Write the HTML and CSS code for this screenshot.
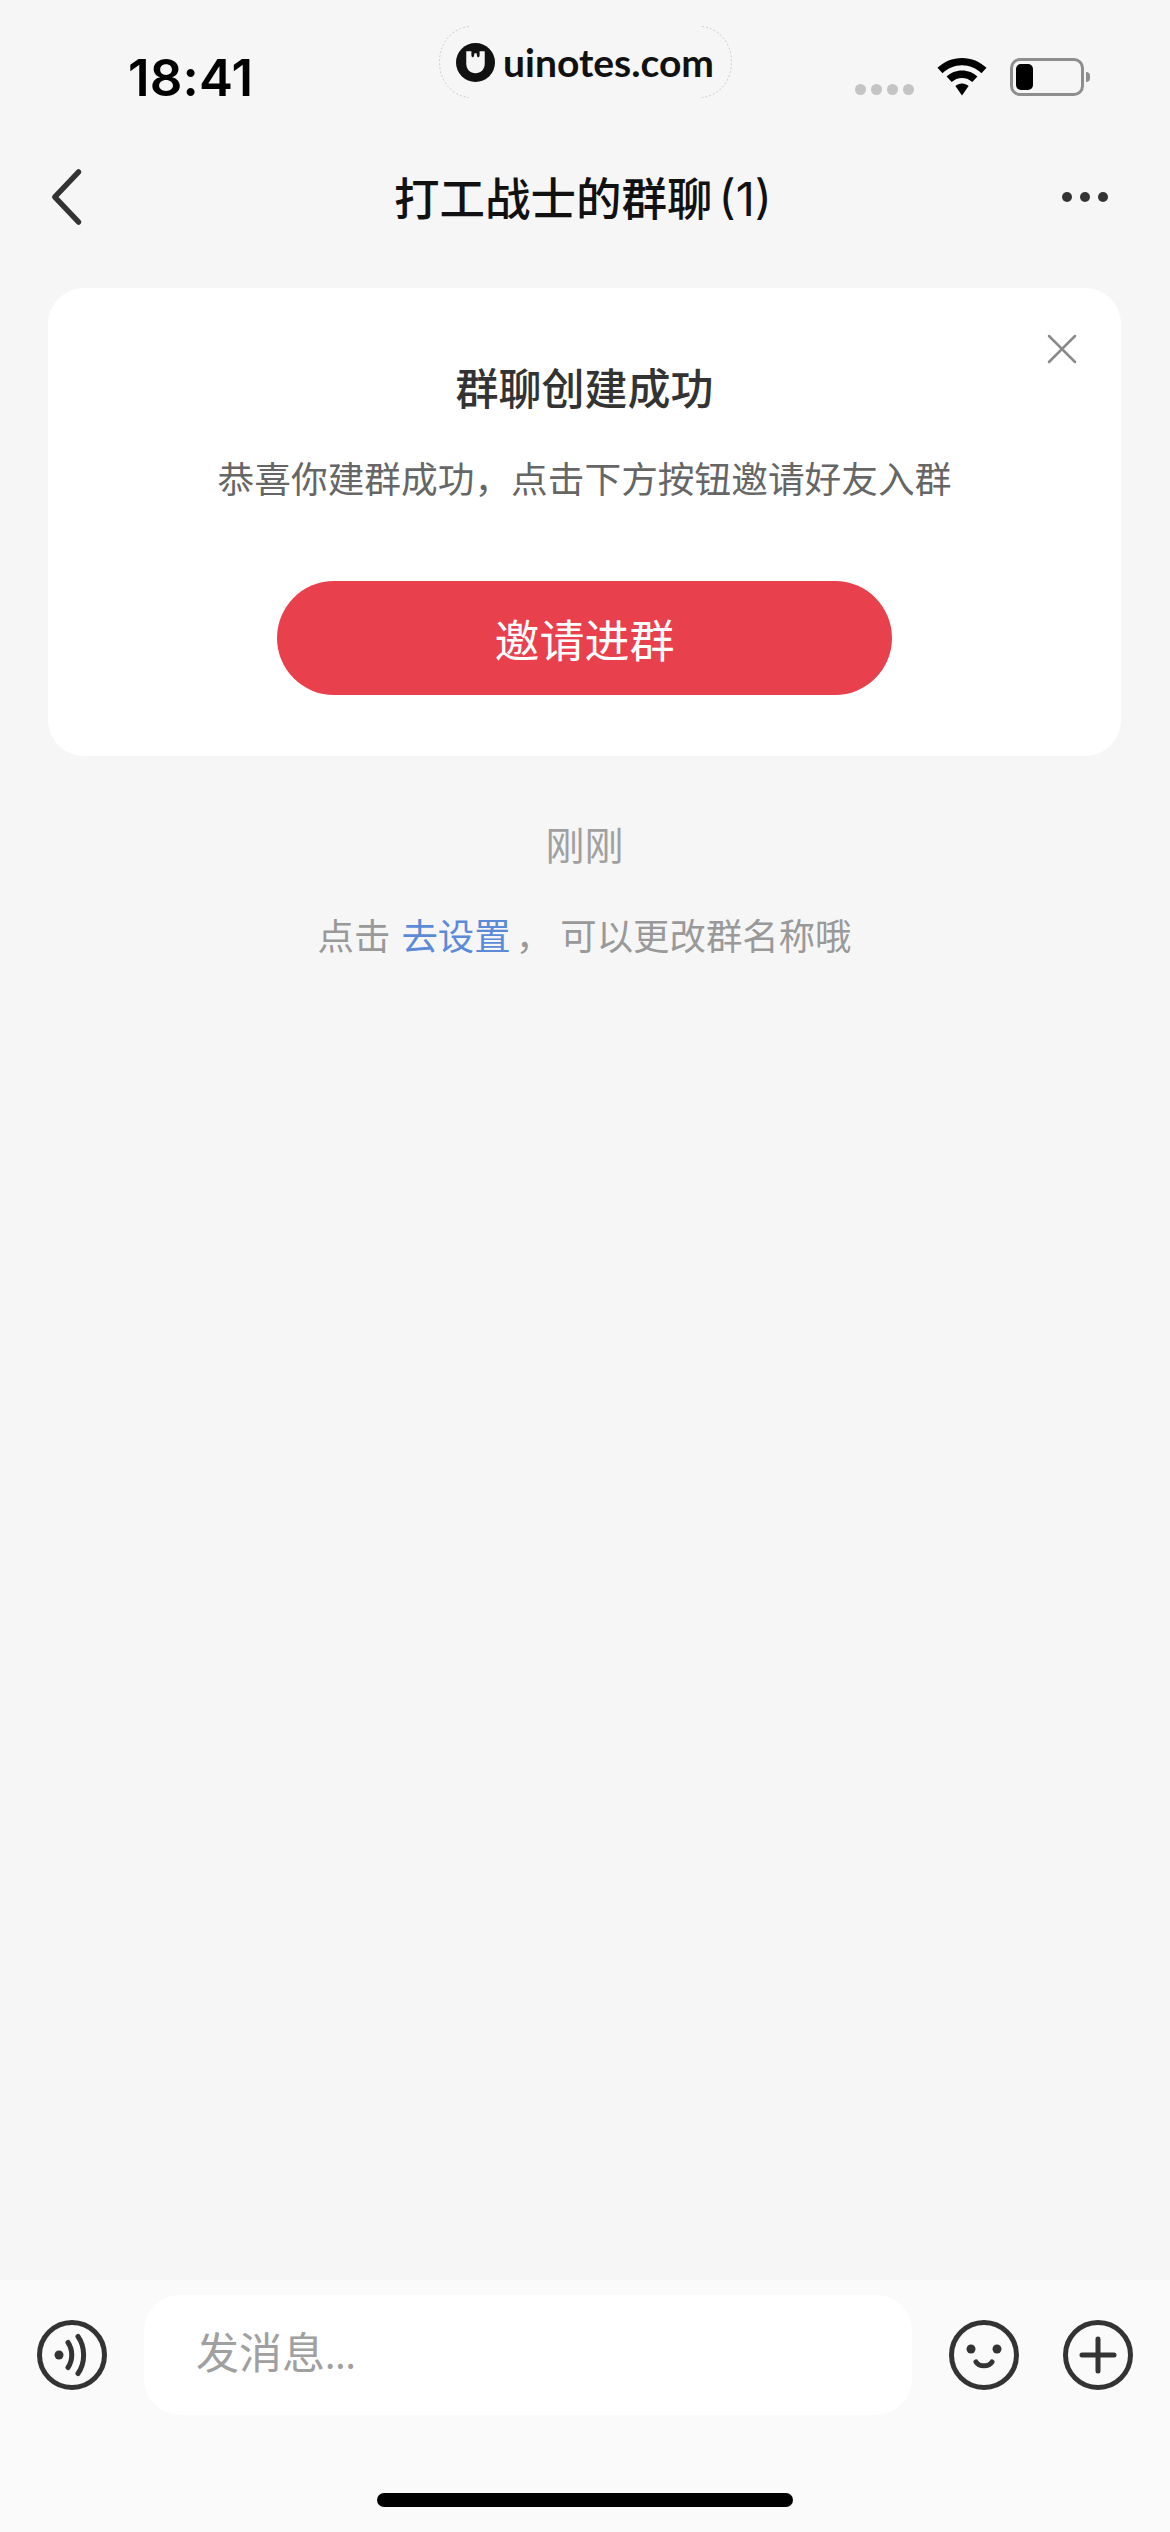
FILE: index.html
```html
<!DOCTYPE html>
<html lang="zh-CN">
<head>
<meta charset="utf-8">
<title>打工战士的群聊</title>
<link rel="stylesheet" href="styles.css">
</head>
<body>
<div class="app">
  <header class="status">
    <div class="time">18:41</div>
    <div class="status-icons">
      <div class="signal"><i></i><i></i><i></i><i></i></div>
      <svg class="wifi" width="50" height="38" viewBox="0 0 50 38"><path d="M25 0C34.500 0 43 3.700 49.500 9.800L44.500 15.300C39.400 10.400 32.500 7.300 25 7.300S10.600 10.400 5.500 15.300L.5 9.800C7 3.700 15.500 0 25 0Z"/><path d="M25 12.500C31 12.500 36.400 14.800 40.400 18.600L35.300 24.100C32.600 21.600 29 20 25 20S17.400 21.600 14.700 24.100L9.600 18.600C13.600 14.800 19 12.500 25 12.500Z"/><path d="M25 25.500C27.500 25.500 29.800 26.400 31.600 28L25 37.500 18.400 28C20.200 26.400 22.500 25.500 25 25.500Z"/></svg>
      <div class="battery"><div class="battery-body"><div class="battery-level"></div></div><div class="battery-cap"></div></div>
    </div>
  </header>
  <div class="watermark">
    <svg class="wm-ring" width="293" height="72" viewBox="0 0 293 72"><path d="M30 .5C14 2 .5 16 .5 36S14 70 30 71.500M263 .5C279 2 292.500 16 292.500 36S279 70 263 71.500" fill="none" stroke="#cfcfcf" stroke-width="1" stroke-dasharray="2 2"/></svg>
    <svg class="wm-logo" width="39" height="39" viewBox="0 0 38 38"><circle cx="19" cy="19" r="19" fill="#111"/><path d="M10 8H15V12C15 14 17 15 17.500 12.500L18 10H20L20.500 12.500C21 15 23 14 23 12V8H28V20C28 26 24 29.500 19 29.500S10 26 10 20Z" fill="#f5f5f5"/></svg>
    <span class="wm-text">uinotes.com</span>
  </div>
  <nav class="nav">
    <svg class="back" width="32" height="56" viewBox="0 0 32 56"><path d="M29 3L4 28L29 53" fill="none" stroke="#333" stroke-width="5.500" stroke-linecap="round" stroke-linejoin="round" transform="matrix(.95 0 0 1 0 0)"/></svg>
    <h1 class="nav-title">打工战士的群聊<span class="nav-count">(1)</span></h1>
    <div class="more"><i></i><i></i><i></i></div>
  </nav>
  <main class="chat">
    <section class="card">
      <svg class="close" width="30" height="30" viewBox="0 0 30 30"><path d="M2 2L28 28M28 2L2 28" stroke="#8a8a8a" stroke-width="2.500" stroke-linecap="round"/></svg>
      <h2 class="card-title">群聊创建成功</h2>
      <p class="card-sub">恭喜你建群成功，点击下方按钮邀请好友入群</p>
      <div class="invite">邀请进群</div>
    </section>
    <div class="stamp">刚刚</div>
    <p class="hint">点击 <a class="link">去设置</a> ， 可以更改群名称哦</p>
  </main>
  <footer class="bar">
    <div class="inputs">
      <svg class="ico" width="70" height="70" viewBox="0 0 70 70"><circle cx="35" cy="35" r="32.500" fill="none" stroke="#333" stroke-width="5"/><circle cx="22" cy="35" r="4.500" fill="#333"/><path d="M31 22.500C36 30 36 40 31 47.500" fill="none" stroke="#333" stroke-width="5" stroke-linecap="round"/><path d="M41 16.500C48.500 27 48.500 43 41 53.500" fill="none" stroke="#333" stroke-width="5" stroke-linecap="round"/></svg>
      <div class="field">发消息<span class="dots">...</span></div>
      <svg class="ico" width="70" height="70" viewBox="0 0 70 70"><circle cx="35" cy="35" r="32.500" fill="none" stroke="#333" stroke-width="5"/><circle cx="22" cy="29" r="4.500" fill="#333"/><circle cx="48" cy="29" r="4.500" fill="#333"/><path d="M27 42C30 47 40 47 43 42" fill="none" stroke="#333" stroke-width="5" stroke-linecap="round"/></svg>
      <svg class="ico" width="70" height="70" viewBox="0 0 70 70"><circle cx="35" cy="35" r="32.500" fill="none" stroke="#333" stroke-width="5"/><path d="M35 19V51M19 35H51" stroke="#333" stroke-width="5" stroke-linecap="round"/></svg>
    </div>
    <div class="home"></div>
  </footer>
</div>
</body>
</html>
```
FILE: styles.css
```css
* { box-sizing: border-box; }
html, body { margin: 0; padding: 0; }
body { background: #f6f6f6; font-family: "Noto Sans CJK SC", "Noto Sans", sans-serif; }
.app { position: relative; width: 1170px; height: 2532px; display: flex; flex-direction: column; overflow: hidden; }
.status { height: 136px; flex: none; display: flex; justify-content: space-between; align-items: flex-start; padding: 48px 80px 0 128px; }
.time { font-family: Inter, sans-serif; font-weight: 600; font-size: 51px; line-height: 60px; color: #000; letter-spacing: 0.2px; }
.status-icons { display: flex; align-items: flex-start; padding-top: 10px; }
.signal { display: flex; gap: 5px; margin: 26px 23px 0 0; }
.signal i { width: 11px; height: 11px; border-radius: 50%; background: #c4c4c4; }
.wifi { display: block; fill: #000; margin-right: 23px; }
.battery { display: flex; align-items: center; }
.battery-body { width: 74px; height: 38px; border: 3.500px solid #8e8e8e; border-radius: 10px; padding: 3px; }
.battery-level { width: 17px; height: 100%; background: #000; border-radius: 5px; }
.battery-cap { width: 4px; height: 10px; background: #8e8e8e; border-radius: 0 4px 4px 0; margin-left: 2px; }
.watermark { position: absolute; left: 439px; top: 26px; width: 293px; height: 72px; display: flex; align-items: center; gap: 8px; padding-left: 17px; }
.wm-ring { position: absolute; left: 0; top: 0; }
.wm-logo { display: block; flex: none; }
.wm-text { font-family: Lato, sans-serif; font-weight: 700; font-size: 39px; line-height: 40px; color: #111; }
.nav { height: 124px; flex: none; display: flex; align-items: center; position: relative; padding: 0 62px 0 51px; justify-content: space-between; margin-top: -1px; }
.back { display: block; }
.nav-title { margin: 0; flex: 1; text-align: center; font-size: 45.500px; line-height: 60px; font-weight: 500; color: #111; padding-left: 21px; }
.nav-count { font-family: Inter, sans-serif; font-weight: 400; margin-left: 6px; font-size: 47px; }
.more { display: flex; gap: 8px; }
.more i { width: 10px; height: 10px; border-radius: 50%; background: #333; display: block; }
.chat { flex: 1; padding: 29px 49px 0 48px; display: flex; flex-direction: column; align-items: center; }
.card { position: relative; width: 100%; height: 468px; background: #fff; border-radius: 36px; display: flex; flex-direction: column; align-items: center; padding-top: 68px; }
.close { position: absolute; right: 44px; top: 46px; }
.card-title { margin: 0; font-size: 43px; line-height: 60px; font-weight: 500; color: #333; }
.card-sub { margin: 31px 0 0; font-size: 36.700px; line-height: 60px; color: #666; font-weight: 400; }
.invite { margin-top: 74px; width: 615px; height: 114px; border-radius: 57px; background: #e9404e; color: #fff; font-size: 45px; display: flex; align-items: center; justify-content: center; }
.stamp { margin-top: 57px; font-size: 39px; line-height: 60px; color: #a0a0a0; }
.hint { margin: 31px 0 0; font-size: 36.400px; line-height: 60px; color: #999; }
.link { color: #5b8bd6; margin: 0 -3px 0 3px; }
.bar { height: 252px; flex: none; background: #fafafa; display: flex; flex-direction: column; align-items: center; }
.inputs { width: 100%; display: flex; align-items: center; padding: 15px 37px 0; }
.ico { display: block; flex: none; }
.ico:last-child { margin-left: 44px; }
.field { width: 768px; height: 120px; margin: 0 37px; background: #fff; border-radius: 36px; padding: 0 0 11px 52px; display: flex; align-items: center; font-size: 43px; color: #a0a0a0; }
.dots { font-size: 37px; align-self: center; margin-top: 6px; }
.home { width: 416px; height: 14px; border-radius: 7px; background: #000; margin-top: 78px; }
```
